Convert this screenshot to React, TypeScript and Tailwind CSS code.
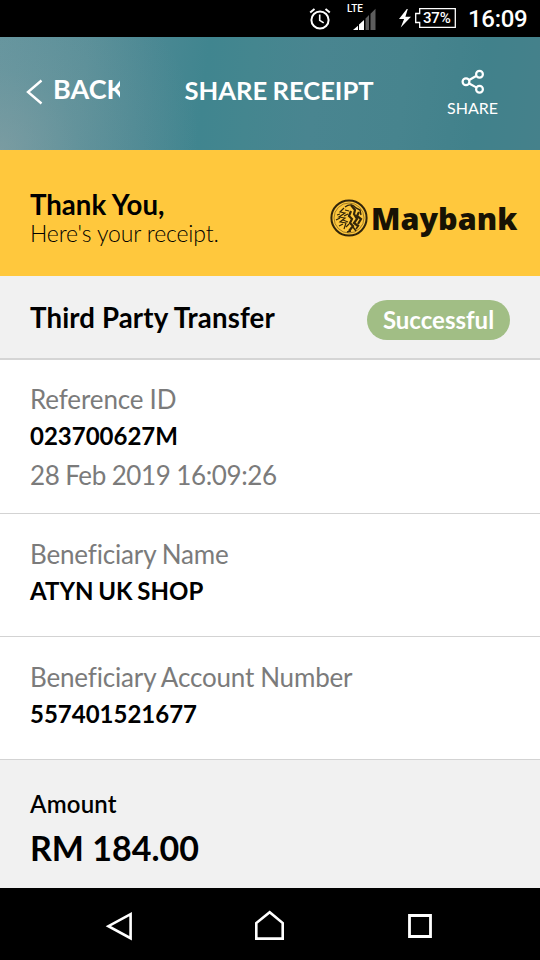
import type { ReactNode } from "react";

function StatusBar() {
  return (
    <div className="flex h-[37px] items-start bg-black font-['Roboto',sans-serif] text-white">
      <svg className="ml-[309px] mt-[7px] h-[23px] w-[22px] shrink-0" viewBox="0 0 22 23" fill="none" stroke="#fff">
        <circle cx="11" cy="13" r="8.6" strokeWidth="2" />
        <path d="M1.2 5.5 5.5 2M20.8 5.5 16.5 2" strokeWidth="2" />
        <path d="M10.7 7.5v5.8l4 2.6" strokeWidth="1.6" />
      </svg>
      <div className="ml-[16px] mt-[3px] flex w-[30px] shrink-0 flex-col">
        <span className="h-[11px] text-[10px] font-medium leading-[12px]">LTE</span>
        <svg className="-mt-[6px] ml-[6px] h-[22px] w-[24px]" viewBox="0 0 24 22">
          <path d="M0 22 5 17.7V22Z" fill="#fff" />
          <path d="M6 16.5 11 12V22H6Z" fill="#fff" />
          <path d="M12.5 10.5 16 7V22H12.5ZM17.5 5.8 22.5 .7V22H17.5Z" fill="#5d5d5d" />
        </svg>
      </div>
      <svg className="ml-[21px] mt-[9px] h-[19px] w-[14px] shrink-0" viewBox="0 0 14 19" fill="#fff">
        <path d="M8.8 0 1 10h5.1L2.7 18.5 13 7.8H7.4L9.8 0Z" />
      </svg>
      <div className="relative ml-[3px] mt-[8px] h-[20px] w-[41px] shrink-0">
        <svg className="absolute inset-0" viewBox="0 0 41 20" fill="none" stroke="#fff" strokeWidth="1.3">
          <path d="M4.7.7H40.3V19.3H4.7V14.5H.7V5.5h4Z" />
        </svg>
        <span className="absolute left-[8px] top-0 text-[15px] font-medium leading-[20px] tracking-[-0.2px]">37%</span>
      </div>
      <span className="ml-[12px] text-[24px] font-medium leading-[39px] tracking-[-0.3px]">16:09</span>
    </div>
  );
}

function Header() {
  return (
    <header className="flex h-[113px] items-start bg-[radial-gradient(circle_at_0%_100%,rgba(150,165,167,0.5)_0px,rgba(150,165,167,0.2)_80px,rgba(150,165,167,0)_200px),linear-gradient(97deg,#5f939d_0%,#568e98_16%,#4a8893_28%,#40858f_38%,#44868f_46%,#498590_58%,#47848e_74%,#41818b_88%,#45818b_100%)] text-white">
      <svg className="ml-[26px] mt-[42px] h-[26px] w-[17px] shrink-0" viewBox="0 0 17 26" fill="none" stroke="#fff" strokeWidth="2.4">
        <path d="M15.5 1.5 2 13 15.5 24.5" />
      </svg>
      <div className="ml-[10px] mt-[36px] w-[67px] shrink-0 overflow-hidden whitespace-nowrap text-[27px] font-bold leading-[32px]">BACK</div>
      <h1 className="ml-[64.5px] mt-[36px] w-[200px] shrink-0 whitespace-nowrap text-[25.6px] font-bold leading-[34px] [word-spacing:-1px]">SHARE RECEIPT</h1>
      <div className="ml-[52px] mt-[32px] flex w-[72px] flex-col items-center">
        <svg className="ml-[1px] h-[26px] w-[24px]" viewBox="0 0 24 26" fill="none" stroke="#fff" strokeWidth="2.2">
          <circle cx="5" cy="12.7" r="3.4" />
          <circle cx="18.5" cy="5.2" r="3.4" />
          <circle cx="18.5" cy="20.2" r="3.4" />
          <path d="m8.2 11 7-4M8.2 14.5l7 3.9" />
        </svg>
        <span className="mt-[3px] text-[16px] leading-[20px]">SHARE</span>
      </div>
    </header>
  );
}

function Emblem() {
  return (
    <svg className="h-[38px] w-[38px] shrink-0" viewBox="0 0 38 38" fill="none" stroke="#33260a">
      <circle cx="19" cy="19" r="17.6" strokeWidth="2" />
      <circle cx="19" cy="19" r="15" stroke="#8a6a20" strokeWidth=".8" />
      <path d="M15 8c4-3 8-3 11 1l4 2 1 5" strokeWidth="1.4" />
      <path d="m21 6 4 5-1 4 3 5-3 4 4 3M29 13l-2 4 4 3-3 5M21 12l-2 5 3 3-2 4 3 3-4 5" strokeWidth="2.2" />
      <path d="m14 9-4 4 5 1-6 4 6 1-5 4 6 1-2 6M7 16l3-1M6 21l4-2M9 27l4-2M15 11l4 1M14 17l4-2M13 21l5 2M16 28l3-3" strokeWidth="1.2" />
      <path d="m23 28 3 4M29 26l-3 4M17 33l4-1" strokeWidth="1.5" />
    </svg>
  );
}

function Detail({ children }: { children: ReactNode }) {
  return <section className="shrink-0 border-b border-[#d3d3d3] bg-white px-[30px]">{children}</section>;
}

export default function App() {
  return (
    <div className="flex h-[960px] w-[540px] flex-col overflow-hidden bg-white font-['Lato',sans-serif] text-black [font-variant-ligatures:none]">
      <StatusBar />
      <Header />
      <section className="flex h-[126px] items-start bg-[#ffc83d] pl-[30px]">
        <div className="mt-[39px] w-[300px] shrink-0">
          <p className="text-[27.6px] font-bold leading-[32px]">Thank You,</p>
          <p className="-mt-[1px] text-[23px] font-light leading-[26px] tracking-[-0.15px]">Here's your receipt.</p>
        </div>
        <div className="mt-[49px] flex h-[38px] items-center">
          <Emblem />
          <span className="ml-[3px] whitespace-nowrap font-['Noto_Sans',sans-serif] text-[30.5px] font-black leading-[38px] text-[#171204]">Maybank</span>
        </div>
      </section>
      <section className="flex h-[84px] items-start justify-between border-b-2 border-[#d5d5d5] bg-[#f1f1f1] pl-[30px] pr-[30px]">
        <h2 className="mt-[26px] whitespace-nowrap text-[27.6px] font-bold leading-[32px] tracking-[0.13px]">Third Party Transfer</h2>
        <div className="mt-[24px] h-[40px] w-[143px] rounded-full bg-[#a1be85] text-center text-[24px] font-bold leading-[40px] text-white">Successful</div>
      </section>
      <Detail>
        <div className="h-[153px] pt-[21px]">
          <p className="text-[26px] leading-[36px] tracking-[-0.12px] text-[#7b7b7b] [word-spacing:-0.5px]">Reference ID</p>
          <p className="mt-[1px] text-[24px] font-bold leading-[36px]">023700627M</p>
          <p className="mt-[3px] text-[26px] leading-[36px] tracking-[-0.38px] text-[#7b7b7b] [word-spacing:-0.5px]">28 Feb 2019 16:09:26</p>
        </div>
      </Detail>
      <Detail>
        <div className="h-[122px] pt-[22px]">
          <p className="text-[26px] leading-[36px] tracking-[-0.17px] text-[#7b7b7b] [word-spacing:-0.5px]">Beneficiary Name</p>
          <p className="mt-[1px] text-[24px] font-bold leading-[36px] [word-spacing:-1px]">ATYN UK SHOP</p>
        </div>
      </Detail>
      <Detail>
        <div className="h-[122px] pt-[22px]">
          <p className="text-[26px] leading-[36px] tracking-[-0.17px] text-[#7b7b7b] [word-spacing:-0.5px]">Beneficiary Account Number</p>
          <p className="mt-[1px] text-[24px] font-bold leading-[36px]">557401521677</p>
        </div>
      </Detail>
      <section className="h-[128px] bg-[#f1f1f1] px-[30px] pt-[26px]">
        <p className="text-[24px] font-semibold leading-[36px] tracking-[0.2px]">Amount</p>
        <p className="mt-[4px] text-[34px] font-bold leading-[44px]">RM 184.00</p>
      </section>
      <nav className="flex h-[72px] shrink-0 items-start bg-black">
        <svg className="ml-[105px] mt-[22px] h-[32px] w-[30px]" viewBox="0 0 30 32" fill="none" stroke="#fff" strokeWidth="2.6">
          <path d="M25.6 4.2v24L3.4 16.2Z" />
        </svg>
        <svg className="ml-[118px] mt-[20px] h-[34px] w-[34px]" viewBox="0 0 34 34" fill="none" stroke="#fff" strokeWidth="2.6">
          <path d="M3.3 30.6V15L16.7 4.2 29.7 15v15.6Z" />
        </svg>
        <svg className="ml-[119px] mt-[24px] h-[28px] w-[28px]" viewBox="0 0 28 28" fill="none" stroke="#fff" strokeWidth="2.8">
          <path d="M3.5 3.5h21v21h-21Z" />
        </svg>
      </nav>
    </div>
  );
}
